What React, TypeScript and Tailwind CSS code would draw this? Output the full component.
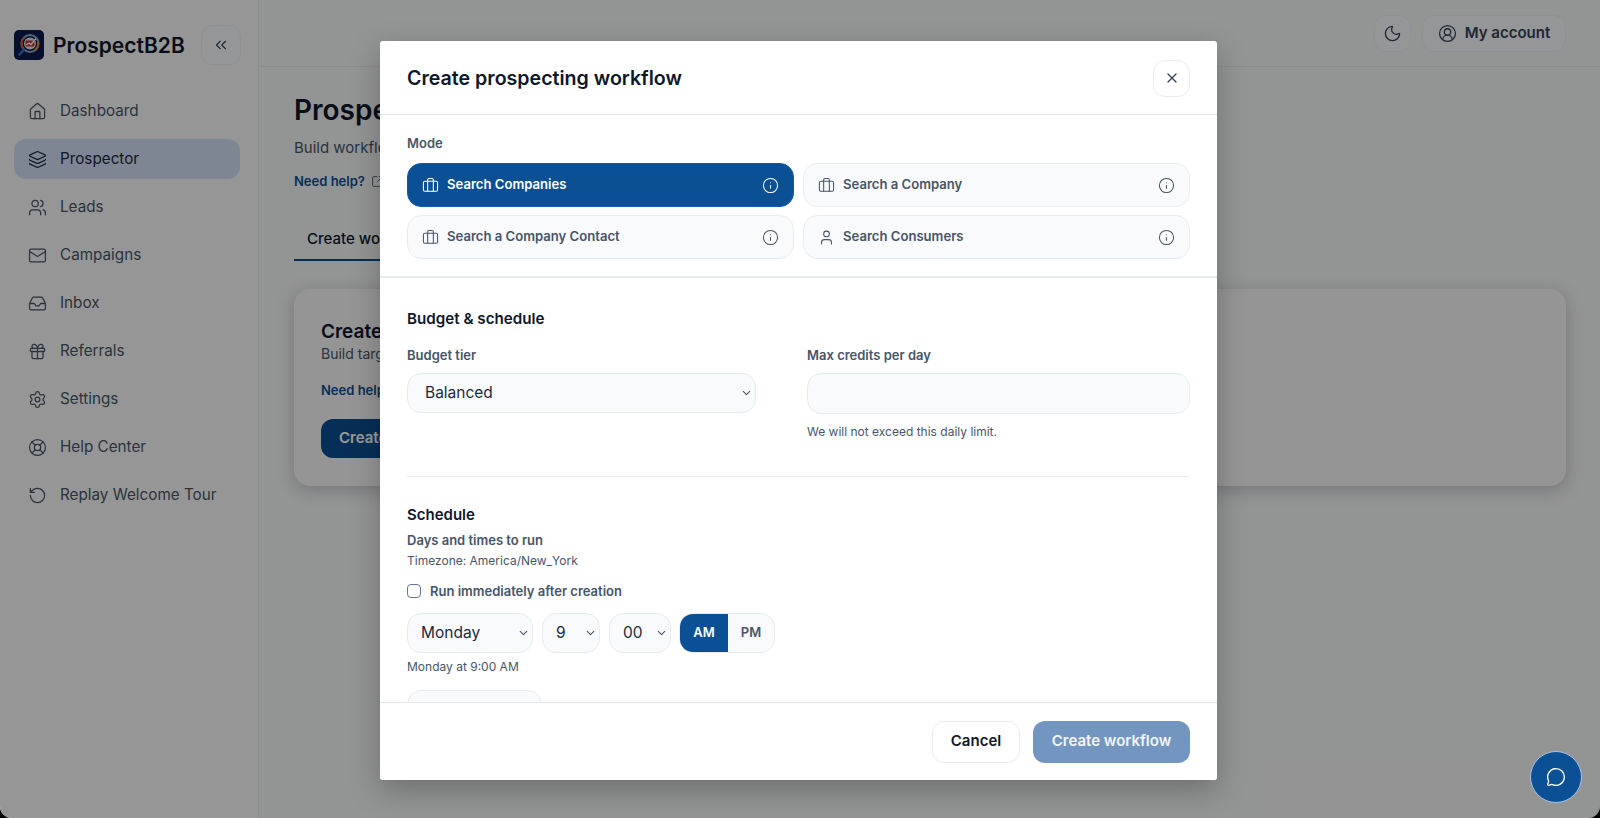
import { useState } from 'react'
import {
  Briefcase,
  ChevronDown,
  ChevronsLeft,
  CircleUserRound,
  Gift,
  House,
  Inbox,
  Info,
  Layers,
  LifeBuoy,
  Mail,
  MessageCircle,
  Moon,
  RotateCcw,
  Settings,
  SquareArrowOutUpRight,
  User,
  Users,
  X,
} from 'lucide-react'

const navItems = [
  { label: 'Dashboard', icon: House },
  { label: 'Prospector', icon: Layers, active: true },
  { label: 'Leads', icon: Users },
  { label: 'Campaigns', icon: Mail },
  { label: 'Inbox', icon: Inbox },
  { label: 'Referrals', icon: Gift },
  { label: 'Settings', icon: Settings },
  { label: 'Help Center', icon: LifeBuoy },
  { label: 'Replay Welcome Tour', icon: RotateCcw },
]

const modes = [
  { label: 'Search Companies', icon: Briefcase },
  { label: 'Search a Company', icon: Briefcase },
  { label: 'Search a Company Contact', icon: Briefcase },
  { label: 'Search Consumers', icon: User },
]

function Logo() {
  return (
    <svg viewBox="0 0 30 30" className="w-[30px] h-[30px] shrink-0">
      <rect width="30" height="30" rx="5" fill="#0a1a4a" />
      <circle cx="16" cy="13.5" r="8.5" fill="none" stroke="#8fa3c4" strokeWidth="2" />
      <path d="M10 7.5a8.5 8.5 0 0 0-1 11" fill="none" stroke="#e2552d" strokeWidth="2" />
      <path d="M21 20a8.5 8.5 0 0 0 3-8" fill="none" stroke="#e58a2c" strokeWidth="2" />
      <circle cx="16" cy="13.5" r="6" fill="#dfe6f0" />
      <rect x="11.5" y="10.5" width="9" height="6" rx="1" fill="#c8322f" />
      <path d="M12 15l3-2 2 1.5 5-6" fill="none" stroke="#ffffff" strokeWidth="1.3" />
      <path d="M10 19.5l-4.5 5" stroke="#2f6fd0" strokeWidth="2.6" strokeLinecap="round" />
    </svg>
  )
}

function SelectBox({ value, className, pad }: { value: string; className: string; pad: string }) {
  return (
    <div className={`relative ${className}`}>
      <select
        defaultValue={value}
        className={`w-full h-full appearance-none bg-[#f8fafc] border border-[#e8ecf1] rounded-[14px] text-[15.5px] text-[#1e293b] outline-none ${pad}`}
      >
        <option>{value}</option>
      </select>
      <ChevronDown className="absolute right-[3px] top-1/2 -translate-y-1/2 w-[13px] h-[13px] text-[#475569] pointer-events-none" strokeWidth={2} />
    </div>
  )
}

export default function App() {
  const [mode, setMode] = useState('Search Companies')

  return (
    <div className="bg-black h-screen w-full overflow-hidden" style={{ fontFamily: 'Inter, "Liberation Sans", sans-serif' }}>
      <div className="relative h-full w-full flex bg-[#f6f7f7] rounded-b-[12px] overflow-hidden">
        {/* Sidebar */}
        <aside className="w-[259px] shrink-0 border-r border-[#e6e8ea] bg-[#fafbfb] flex flex-col">
          <div className="flex items-center pl-[14px] pt-[25px]">
            <Logo />
            <span className="ml-[9px] text-[21px] leading-none font-semibold text-[#0f172a]">ProspectB2B</span>
            <button className="ml-[16px] w-10 h-10 rounded-[12px] bg-[#f8fafc] border border-[#eef1f5] flex items-center justify-center text-[#334155]">
              <ChevronsLeft className="w-[18px] h-[18px]" strokeWidth={1.5} />
            </button>
          </div>
          <nav className="mt-[26px] px-[14px] w-[254px] flex flex-col gap-2">
            {navItems.map(item => (
              <a
                key={item.label}
                className={`h-10 flex items-center gap-[13px] pl-[14px] rounded-[12px] text-[15.25px] ${
                  item.active ? 'bg-[#d0e0f3] text-[#1e293b]' : 'text-[#475569]'
                }`}
              >
                <item.icon className="w-[19px] h-[19px] shrink-0" strokeWidth={1.6} />
                {item.label}
              </a>
            ))}
          </nav>
        </aside>

        {/* Main */}
        <div className="flex-1 min-w-0 flex flex-col">
          <header className="h-[67px] shrink-0 border-b border-[#e8eaec] flex items-start justify-end gap-[11px] pt-[15px] pr-[34px]">
            <button className="w-[37px] h-[37px] rounded-[12px] bg-[#f8fafc] border border-[#eef1f5] flex items-center justify-center text-[#334155]">
              <Moon className="w-[19px] h-[19px]" strokeWidth={1.6} />
            </button>
            <button className="w-[144px] h-[37px] rounded-[12px] bg-[#f8fafc] border border-[#eef1f5] flex items-center justify-center gap-2 text-[15px] font-semibold text-[#334155]">
              <CircleUserRound className="w-[19px] h-[19px]" strokeWidth={1.6} />
              My account
            </button>
          </header>
          <main className="pl-[35px] pr-[34px] pt-[25px]">
            <h1 className="text-[28px] leading-9 font-semibold text-[#0f172a]">Prospector</h1>
            <p className="mt-[10px] text-[15px] leading-[20px] text-[#475569]">Build workflows that find your ideal prospects.</p>
            <a className="mt-[13px] flex items-center gap-[6px] text-[13px] leading-5 font-semibold text-[#0b4f91]">
              Need help?
              <SquareArrowOutUpRight className="w-[13px] h-[13px] text-[#475569]" strokeWidth={1.6} />
            </a>
            <div className="mt-[34px] h-[36px] w-[160px] border-b-2 border-[#0b4f91] pl-[13px] text-[15px] leading-[28px] font-medium text-[#0f172a]">
              Create workflow
            </div>
            <section className="mt-[28px] h-[197px] rounded-[16px] bg-[#f8f9f9] shadow-[0_4px_18px_rgba(15,23,42,0.22)] px-[27px] pt-[29px]">
              <h2 className="text-[19px] leading-[28px] font-semibold text-[#0f172a]">Create a workflow</h2>
              <p className="-mt-[2px] text-[14px] leading-5 text-[#475569]">Build targeted prospect lists automatically.</p>
              <a className="block mt-[16px] text-[13px] leading-5 font-semibold text-[#0b4f91]">Need help?</a>
              <button className="mt-[19px] h-[39px] px-[18px] rounded-[12px] bg-[#0b4f91] text-[15px] font-semibold text-white">Create workflow</button>
            </section>
          </main>
        </div>

        {/* Modal backdrop */}
        <div className="absolute inset-0 bg-black/40 flex items-start justify-center pt-[41px] pr-[3px]">
          <div className="w-[837px] h-[739px] bg-white rounded-[3px] shadow-[0_10px_30px_rgba(0,0,0,0.25)] flex flex-col overflow-hidden">
            <div className="h-[74px] shrink-0 border-b border-[#e5e7eb] flex items-center justify-between pl-[27px] pr-[27px]">
              <h2 className="mt-[3px] text-[19.6px] font-semibold text-[#0f172a]">Create prospecting workflow</h2>
              <button className="mt-[1px] w-[37px] h-[37px] rounded-[12px] border border-[#e8ecf1] flex items-center justify-center text-[#334155]">
                <X className="w-[16px] h-[16px]" strokeWidth={1.8} />
              </button>
            </div>

            <div className="flex-1 min-h-0 overflow-hidden">
              <div className="px-[27px] pt-[18px] pb-[17px] border-b-[2px] border-[#e8ebef]">
                <div className="text-[13px] leading-5 font-semibold text-[#475569]">Mode</div>
                <div className="mt-[10px] grid grid-cols-2 gap-x-[9px] gap-y-2">
                  {modes.map(m => {
                    const active = m.label === mode
                    return (
                      <button
                        key={m.label}
                        onClick={() => setMode(m.label)}
                        className={`h-[44px] rounded-[14px] border flex items-center pl-[14px] pr-[14px] text-[13.1px] font-semibold ${
                          active
                            ? 'bg-[#0b5094] border-[#0a5cb0] text-white'
                            : 'bg-[#f8fafc] border-[#e8ecf1] text-[#475569]'
                        }`}
                      >
                        <m.icon className="w-[17px] h-[17px] shrink-0" strokeWidth={1.5} />
                        <span className="ml-[8px] flex-1 text-left">{m.label}</span>
                        <Info className="w-[17px] h-[17px] shrink-0" strokeWidth={1.5} />
                      </button>
                    )
                  })}
                </div>
              </div>

              <div className="px-[27px] pt-[31px]">
                <h3 className="text-[15.2px] leading-5 font-semibold text-[#0f172a]">Budget &amp; schedule</h3>
                <div className="mt-[16px] grid grid-cols-[349px_383px] gap-x-[51px]">
                  <div>
                    <label className="block text-[13px] leading-5 font-semibold text-[#475569]">Budget tier</label>
                    <SelectBox value="Balanced" className="mt-2 h-10" pad="pl-[17px] pr-8" />
                  </div>
                  <div>
                    <label className="block text-[13px] leading-5 font-semibold text-[#475569]">Max credits per day</label>
                    <input className="mt-2 w-full h-[41px] bg-[#f8fafc] border border-[#e8ecf1] rounded-[14px] outline-none" />
                    <p className="mt-[10px] text-[12px] leading-4 text-[#475569]">We will not exceed this daily limit.</p>
                  </div>
                </div>
                <div className="mt-[36px] border-t border-[#e8ebef]" />

                <h3 className="mt-[28px] text-[15px] leading-5 font-semibold text-[#0f172a]">Schedule</h3>
                <div className="mt-[6px] text-[13px] leading-[18px] font-semibold text-[#475569]">Days and times to run</div>
                <div className="mt-[4px] text-[12px] leading-4 text-[#475569]">Timezone: America/New_York</div>
                <label className="mt-[13px] flex items-center gap-[9px] text-[13px] leading-[18px] font-semibold text-[#475569]">
                  <input type="checkbox" className="appearance-none w-[14px] h-[14px] rounded-[4px] border border-[#64748b] bg-white" />
                  Run immediately after creation
                </label>
                <div className="mt-[13px] flex items-center">
                  <SelectBox value="Monday" className="w-[126px] h-10" pad="pl-[13px] pr-6" />
                  <SelectBox value="9" className="ml-[9px] w-[58px] h-10" pad="pl-[13px] pr-5" />
                  <SelectBox value="00" className="ml-[9px] w-[62px] h-10" pad="pl-[13px] pr-5" />
                  <div className="ml-[8px] h-10 w-[96px] flex rounded-[14px] border border-[#e8ecf1] overflow-hidden bg-[#f8fafc]">
                    <button className="w-[48px] bg-[#0b5094] text-white text-[13px] font-semibold">AM</button>
                    <button className="flex-1 text-[#475569] text-[13px] font-semibold">PM</button>
                  </div>
                </div>
                <div className="mt-[6px] text-[12px] leading-4 text-[#475569]">Monday at 9:00 AM</div>
                <div className="mt-[15px] w-[135px] h-10 rounded-[14px] border border-[#e8ecf1] bg-[#f8fafc]" />
              </div>
            </div>

            <div className="h-[78px] shrink-0 border-t border-[#e5e7eb] flex items-center justify-end gap-[13px] pr-[27px] bg-white">
              <button className="w-[88px] h-[42px] rounded-[12px] border border-[#e8ecf1] bg-white text-[15px] font-semibold text-[#0f172a]">Cancel</button>
              <button className="w-[157px] h-[42px] rounded-[12px] bg-[#7396c0] text-[15px] font-semibold text-white/90">Create workflow</button>
            </div>
          </div>
        </div>

        {/* Chat launcher */}
        <button className="absolute right-[18px] bottom-[15px] w-[52px] h-[52px] rounded-full bg-[#0b5094] border border-[#a9c4e4] flex items-center justify-center text-white">
          <MessageCircle className="w-5 h-5" strokeWidth={1.6} />
        </button>
      </div>
    </div>
  )
}
